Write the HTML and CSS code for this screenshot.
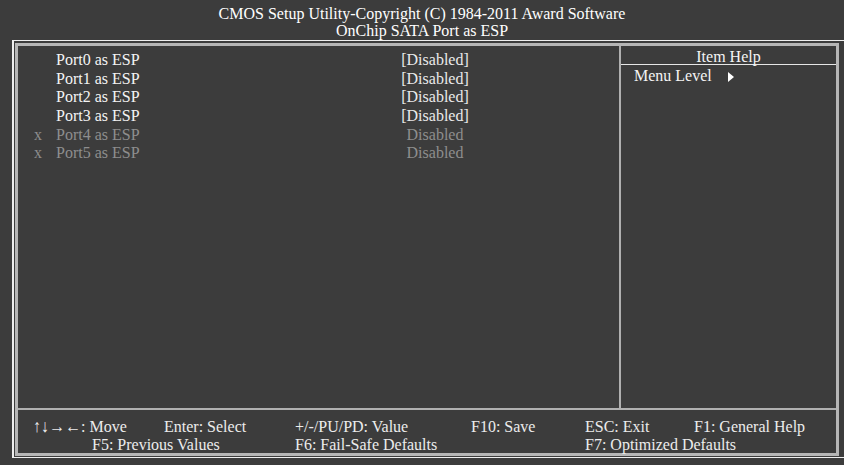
FILE: index.html
```html
<!DOCTYPE html>
<html lang="en">
<head>
    <meta charset="UTF-8">
    <meta name="viewport" content="width=device-width, initial-scale=1.0">
    <title>OnChip SATA Port as ESP</title>
    <link rel="stylesheet" href="styles.css">
</head>
<body>
    <div class="header">
        <div>CMOS Setup Utility-Copyright (C) 1984-2011 Award Software</div>
        <div>OnChip SATA Port as ESP</div>
    </div>

    <div class="frame">
        <div class="panel">
            <div class="main">
                <div class="items">
                    <div class="row"><span class="mark"></span><span class="label">Port0 as ESP</span><span class="value">[Disabled]</span></div>
                    <div class="row"><span class="mark"></span><span class="label">Port1 as ESP</span><span class="value">[Disabled]</span></div>
                    <div class="row"><span class="mark"></span><span class="label">Port2 as ESP</span><span class="value">[Disabled]</span></div>
                    <div class="row"><span class="mark"></span><span class="label">Port3 as ESP</span><span class="value">[Disabled]</span></div>
                    <div class="row locked"><span class="mark">x</span><span class="label">Port4 as ESP</span><span class="value">Disabled</span></div>
                    <div class="row locked"><span class="mark">x</span><span class="label">Port5 as ESP</span><span class="value">Disabled</span></div>
                </div>
                <div class="help">
                    <div class="help-title"><span class="tall">Item Help</span></div>
                    <div class="help-body">
                        <span class="tall">Menu Level</span>
                        <svg class="arrow" width="6" height="10" viewBox="0 0 6 10"><polygon points="0,0 6,5 0,10" fill="#ffffff"/></svg>
                    </div>
                </div>
            </div>

            <div class="footer">
                <span class="k-move">&#8593;&#8595;&#8594;&#8592;: Move</span>
                <span class="k-enter">Enter: Select</span>
                <span class="k-value">+/-/PU/PD: Value</span>
                <span class="k-save">F10: Save</span>
                <span class="k-exit">ESC: Exit</span>
                <span class="k-help">F1: General Help</span>
                <span class="k-prev">F5: Previous Values</span>
                <span class="k-fail">F6: Fail-Safe Defaults</span>
                <span class="k-opt">F7: Optimized Defaults</span>
            </div>
        </div>
    </div>
</body>
</html>
```

FILE: styles.css
```css
body {
    margin: 0;
    width: 844px;
    height: 465px;
    overflow: hidden;
    background-color: #3c3c3c;
    color: #f4f4f4;
    font-family: "Liberation Serif", "Times New Roman", serif;
    font-size: 16px;
    line-height: 18px;
}

/* the text of the screen is a bit taller than plain Times */
.header div,
.row,
.tall,
.footer span {
    transform: scaleY(1.1);
}

.tall {
    display: inline-block;
}

.header {
    padding-top: 4px;
    height: 40px;
    box-sizing: border-box;
    text-align: center;
    color: #ffffff;
}

.frame {
    margin-left: 12px;
    width: 834px;
    border: 1px solid #eeeeee;
    border-left-width: 2px;
    padding: 2px 8px 1px 1px;
}

.panel {
    width: 818px;
    height: 407px;
    border: 3px solid #b6b6b6;
    display: flex;
    flex-direction: column;
}

.main {
    height: 362px;
    display: flex;
    border-bottom: 2px solid #b0b0b0;
}

.items {
    width: 603px;
    border-right: 2px solid #b0b0b0;
    padding-top: 5px;
    padding-left: 16px;
    box-sizing: border-box;
}

.row {
    display: grid;
    grid-template-columns: 22px 244px 270px;
    height: 18.67px;
    line-height: 18.67px;
}

.value {
    text-align: center;
    color: #eaeaea;
}

.locked {
    color: #8e8e8e;
}

.locked .value {
    color: #8e8e8e;
}

.help {
    flex: 1;
}

.help-title {
    height: 17px;
    padding-top: 1px;
    line-height: 17px;
    text-align: center;
    border-bottom: 1px solid #e6e6e6;
}

.help-body {
    padding-top: 2px;
    padding-left: 13px;
    line-height: 18px;
}

.arrow {
    margin-left: 12px;
    vertical-align: -1px;
}

.footer {
    flex: 1;
    display: grid;
    grid-template-columns: 59px 72px 131px 176px 114px 109px 1fr;
    grid-auto-rows: 18px;
    padding: 7px 0 0 15px;
    color: #ececec;
    white-space: nowrap;
}

.k-move { grid-column: 1 / span 2; }
.k-enter { grid-column: 3; }
.k-value { grid-column: 4; }
.k-save { grid-column: 5; }
.k-exit { grid-column: 6; }
.k-help { grid-column: 7; }
.k-prev { grid-column: 2 / span 2; }
.k-fail { grid-column: 4; }
.k-opt { grid-column: 6 / span 2; }
```
